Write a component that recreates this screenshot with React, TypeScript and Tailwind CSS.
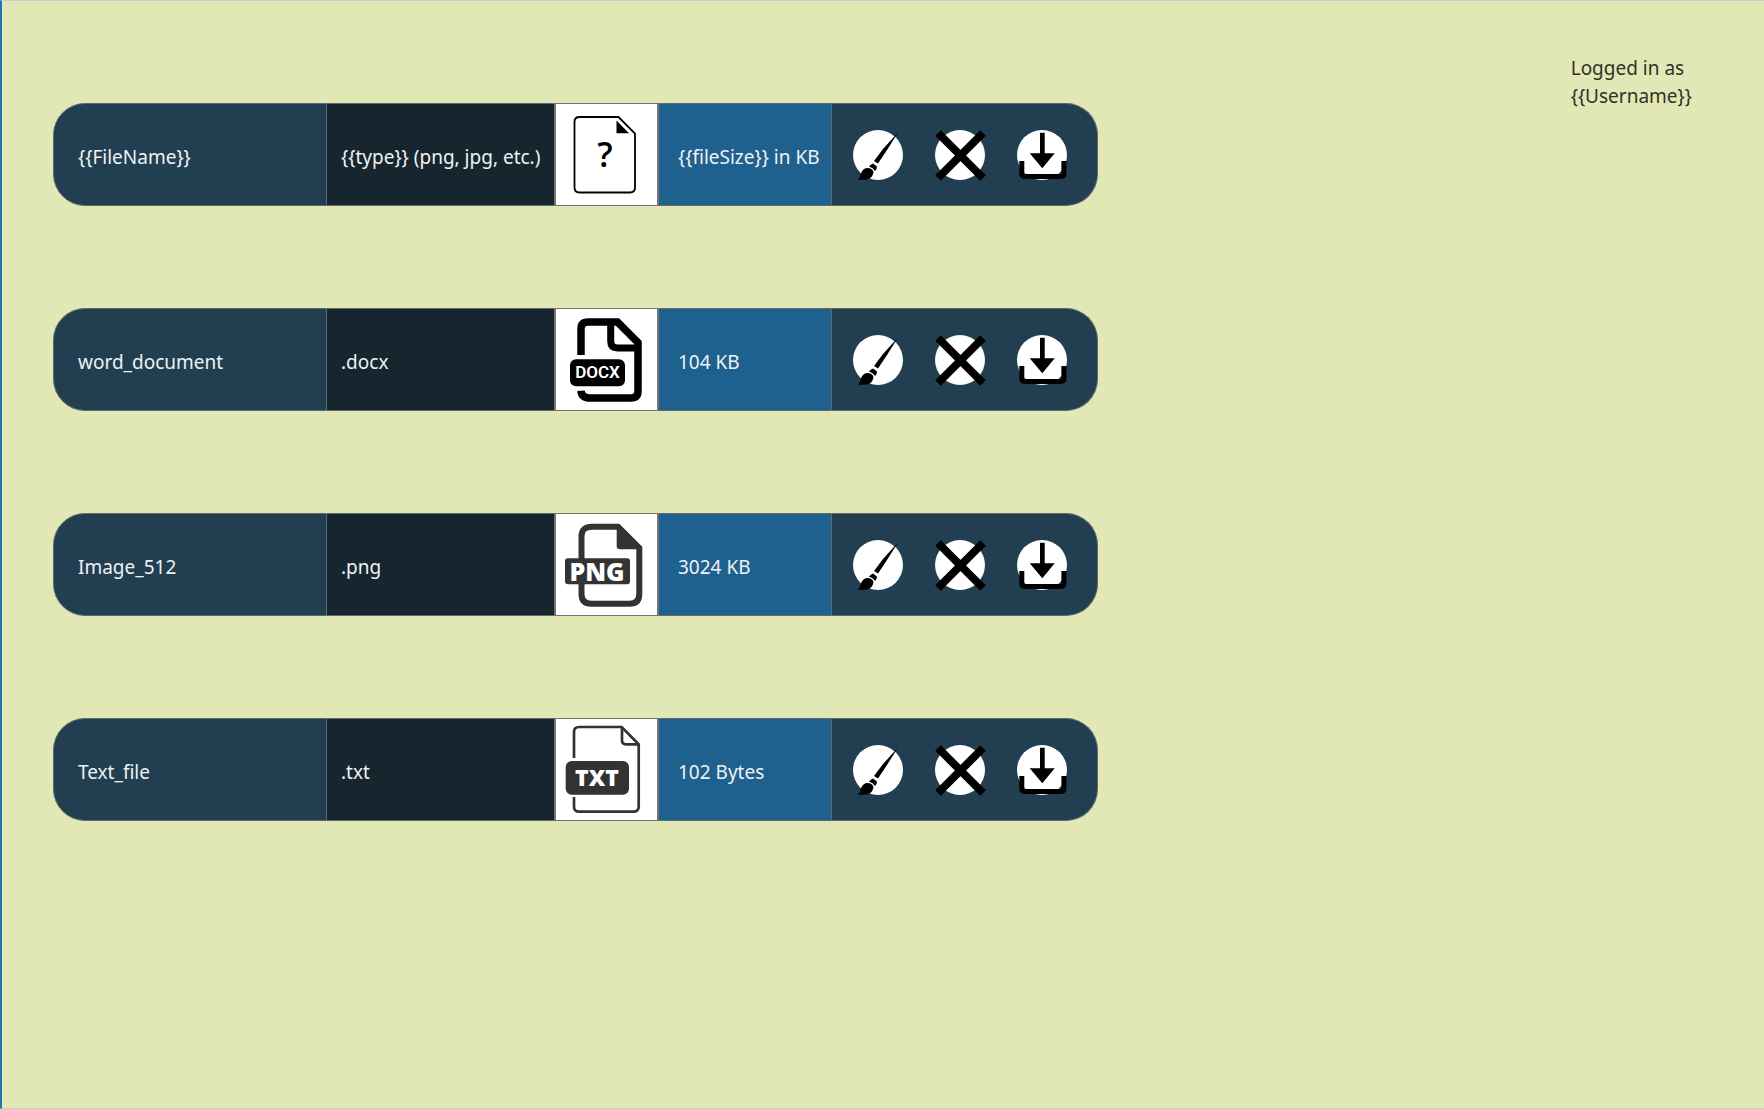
import React from "react";

type Kind = "unknown" | "docx" | "png" | "txt";

interface FileRow {
  name: string;
  type: string;
  kind: Kind;
  size: string;
}

const files: FileRow[] = [
  { name: "{{FileName}}", type: "{{type}} (png, jpg, etc.)", kind: "unknown", size: "{{fileSize}} in KB" },
  { name: "word_document", type: ".docx", kind: "docx", size: "104 KB" },
  { name: "Image_512", type: ".png", kind: "png", size: "3024 KB" },
  { name: "Text_file", type: ".txt", kind: "txt", size: "102 Bytes" },
];

function UnknownIcon() {
  return (
    <>
      <path d="M23.5 12H62.5L79 28.5V82.5Q79 87.5 74 87.5H23.5Q18.5 87.5 18.5 82.5V17Q18.5 12 23.5 12Z" fill="none" stroke="#000" strokeWidth="1.8" />
      <path d="M60.5 15.5V28.3H73Z" fill="#000" />
      <text x="49" y="62" textAnchor="middle" className="font-['Open_Sans'] text-[34px] font-semibold">?</text>
    </>
  );
}

function DocxIcon() {
  return (
    <>
      <path d="M25 45V19Q25 12 32 12H61.5L82 32.5V81Q82 88 75 88H34Q25.5 88 25 80.7" fill="none" stroke="#000" strokeWidth="7.5" />
      <path d="M54.7 12V31Q54.7 38 61.5 38H82" fill="none" stroke="#000" strokeWidth="7" />
      <rect x="14" y="49.3" width="55" height="27" rx="6" fill="#000" />
      <text x="41.5" y="68" textAnchor="middle" fill="#fff" className="font-['Roboto'] text-[17px] font-semibold">DOCX</text>
    </>
  );
}

function PngIcon() {
  return (
    <>
      <path d="M36 11.7H62L83.3 33V79Q83.3 88.7 73.5 88.7H35.5Q25.5 88.7 25.5 79V21.5Q25.5 11.7 36 11.7Z" fill="none" stroke="#333" strokeWidth="6" />
      <path d="M60.7 9V31Q60.7 34.3 64 34.3H85L85.5 32L63 9Z" fill="#333" />
      <rect x="9" y="43.3" width="65" height="26" rx="3" fill="#333" />
      <text x="41" y="65.5" textAnchor="middle" fill="#fff" className="font-['Open_Sans'] text-[25px] font-extrabold">PNG</text>
    </>
  );
}

function TxtIcon() {
  return (
    <>
      <path d="M18 38V12Q18 7 23 7H65.7L82.7 24.3V86.5Q82.7 91.7 77.5 91.7H23Q18 91.7 18 86.5V77" fill="none" stroke="#333" strokeWidth="2.7" />
      <path d="M66 7V20.5Q66 24.3 70 24.3H82.7" fill="none" stroke="#333" strokeWidth="2.7" />
      <rect x="9.7" y="41" width="63.3" height="33.7" rx="6" fill="#333" />
      <text x="41" y="66" textAnchor="middle" fill="#fff" className="font-['Open_Sans'] text-[23px] font-extrabold">TXT</text>
    </>
  );
}

function TypeIcon({ kind }: { kind: Kind }) {
  return (
    <svg viewBox="0 -1 101 101" className="block size-[101px]" role="img" aria-label={kind}>
      {kind === "unknown" && <UnknownIcon />}
      {kind === "docx" && <DocxIcon />}
      {kind === "png" && <PngIcon />}
      {kind === "txt" && <TxtIcon />}
    </svg>
  );
}

function Brush() {
  return (
    <>
      <path d="M45 2.500L34 20L25 33.500L21 31L30 19Z" />
      <path d="M20 33.500L24 36.500Q24 39.500 22 41Q20 37.500 16 36.500Q17.500 34.500 20 33.500Z" />
      <path d="M14 38Q20 38 20.500 42.500Q19 50 11 49.700H5Q7.500 46.500 8 43.500Q9.500 38.500 14 38Z" />
    </>
  );
}

function Cross() {
  return <path d="M3 3L48 48M48 3L3 48" stroke="#000" strokeWidth="8" />;
}

function Download() {
  return (
    <>
      <path d="M23 2.7H27.7V23.3H37.7L25.3 38.3L12.7 23.3H23Z" />
      <path d="M4.8 31V43.5Q4.8 46.4 7.7 46.4H44Q46.9 46.4 46.9 43.5V31" fill="none" stroke="#000" strokeWidth="5" />
    </>
  );
}

function ActionButton({ label, children }: { label: string; children: React.ReactNode }) {
  return (
    <button type="button" aria-label={label} className="size-[50px] rounded-full bg-white">
      <svg viewBox="0 0 50 50" className="block size-full overflow-visible">{children}</svg>
    </button>
  );
}

export default function App() {
  return (
    <div className="flex min-h-screen items-start justify-between border-y border-l-2 border-y-[#cccccc] border-l-[#2672b0] bg-[#e1e8b5] pr-[72px] pl-[51px] font-['Noto_Sans',sans-serif] text-[19px]">
      <table className="border-separate border-spacing-x-0 border-spacing-y-[102px] text-left text-[#eef2f4]">
        <tbody>
          {files.map((file) => (
            <tr key={file.name} className="h-[103px]">
              <th scope="row" className="w-[274px] rounded-l-[32px] border border-[#5f6b6b] bg-[#213f51] pt-1.5 pl-6 font-normal">{file.name}</th>
              <td className="w-[227px] border-y border-[#5f6b6b] bg-[#17262e] pt-1.5 pl-[14px] whitespace-nowrap">{file.type}</td>
              <td className="border border-x-2 border-[#737373] bg-white p-0"><TypeIcon kind={file.kind} /></td>
              <td className="w-[173px] border-y border-r border-[#5f6b6b] bg-[#1e608e] pt-1.5 pl-[19px] whitespace-nowrap">{file.size}</td>
              <td className="rounded-r-[32px] border border-l-0 border-[#5f6b6b] bg-[#213f51] py-0 pr-[30px] pl-[21px]">
                <div className="flex gap-8">
                  <ActionButton label="Rename"><Brush /></ActionButton>
                  <ActionButton label="Delete"><Cross /></ActionButton>
                  <ActionButton label="Download"><Download /></ActionButton>
                </div>
              </td>
            </tr>
          ))}
        </tbody>
      </table>
      <p className="pt-[53px] leading-7 text-[#2f3128]">
        Logged in as
        <br />
        {"{{Username}}"}
      </p>
    </div>
  );
}
